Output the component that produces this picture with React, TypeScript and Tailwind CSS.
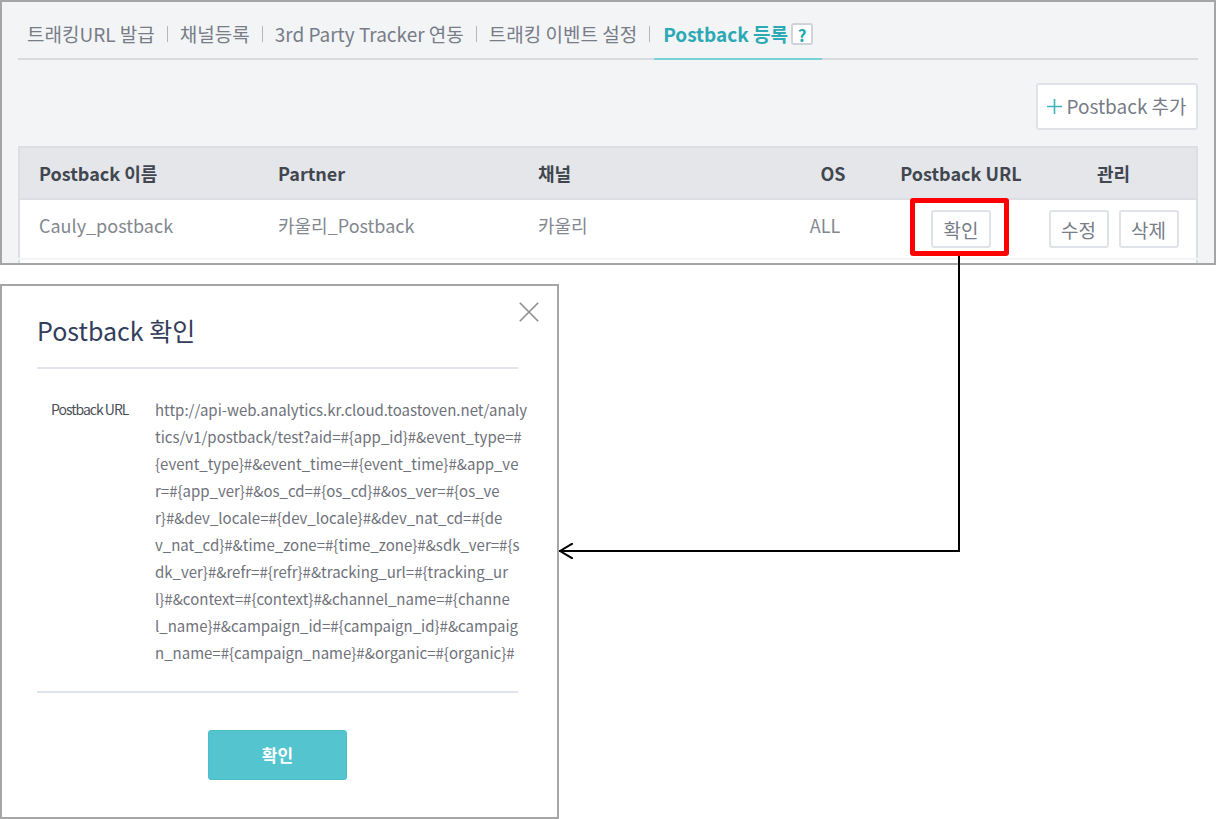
import React from "react";

const tabs = ["트래킹URL 발급", "채널등록", "3rd Party Tracker 연동", "트래킹 이벤트 설정"];

const urlLines = [
  "http://api-web.analytics.kr.cloud.toastoven.net/analy",
  "tics/v1/postback/test?aid=#{app_id}#&event_type=#",
  "{event_type}#&event_time=#{event_time}#&app_ve",
  "r=#{app_ver}#&os_cd=#{os_cd}#&os_ver=#{os_ve",
  "r}#&dev_locale=#{dev_locale}#&dev_nat_cd=#{de",
  "v_nat_cd}#&time_zone=#{time_zone}#&sdk_ver=#{s",
  "dk_ver}#&refr=#{refr}#&tracking_url=#{tracking_ur",
  "l}#&context=#{context}#&channel_name=#{channe",
  "l_name}#&campaign_id=#{campaign_id}#&campaig",
  "n_name=#{campaign_name}#&organic=#{organic}#",
];

function RowButton({ children }: { children: React.ReactNode }) {
  return (
    <button
      type="button"
      className="h-[38px] w-[60px] rounded-[3px] border-2 border-[#dfe2e7] bg-white text-[19px] leading-none text-[#777c87]"
    >
      {children}
    </button>
  );
}

function TabBar() {
  return (
    <nav className="flex h-[58px] items-stretch border-b-2 border-[#d9dbdf] pl-[9px] text-[19px] whitespace-nowrap text-[#777c87]">
      {tabs.map((tab) => (
        <div key={tab} className="flex items-center pt-2">
          <a href="#" className="block">
            {tab}
          </a>
          <span className="mx-3 h-4 w-px bg-[#b4b6bb]" />
        </div>
      ))}
      <div className="-mb-[2px] -ml-2 flex items-center gap-[3px] border-b-2 border-[#79d2d8] px-[9px] pt-2">
        <a href="#" aria-current="page" className="font-bold text-[#2ba9b4]">
          Postback 등록
        </a>
        <button
          type="button"
          aria-label="도움말"
          className="flex size-[22px] items-center justify-center rounded-[3px] border-2 border-[#d0d3d8] bg-white text-[17px] font-bold leading-none text-[#1ea9b0]"
        >
          ?
        </button>
      </div>
    </nav>
  );
}

function PostbackTable() {
  return (
    <table className="w-full table-fixed border-collapse text-left text-[18px] text-[#83878f]">
      <colgroup>
        <col className="w-[240px]" />
        <col className="w-[260px]" />
        <col />
        <col className="w-[116px]" />
        <col className="w-[140px]" />
        <col className="w-[166px]" />
      </colgroup>
      <thead>
        <tr className="h-[52px] border-2 border-[#dcdee3] bg-[#e4e6ea] text-[#41464f]">
          <th className="pl-[19px] font-bold">Postback 이름</th>
          <th className="pl-[19px] font-bold">Partner</th>
          <th className="pl-[19px] font-bold">채널</th>
          <th className="text-center font-bold">OS</th>
          <th className="text-center font-bold">Postback URL</th>
          <th className="text-center font-bold">관리</th>
        </tr>
      </thead>
      <tbody>
        <tr className="h-[60px] border-x-2 border-b-2 border-x-[#dcdee3] border-b-[#f4f5f6] bg-white">
          <td className="pb-2 pl-[19px]">Cauly_postback</td>
          <td className="pb-2 pl-[19px]">카울리_Postback</td>
          <td className="pb-2 pl-[19px]">카울리</td>
          <td className="pb-2 pr-4 text-center">ALL</td>
          <td>
            <div className="relative mx-auto w-[60px]">
              <RowButton>확인</RowButton>
              <span className="pointer-events-none absolute -top-3 -right-[18px] -bottom-2 -left-[21px] rounded-[3px] border-[5px] border-[#ff0000]" />
            </div>
          </td>
          <td>
            <div className="flex justify-center gap-[10px]">
              <RowButton>수정</RowButton>
              <RowButton>삭제</RowButton>
            </div>
          </td>
        </tr>
        <tr className="h-1 border-x-2 border-[#dcdee3] bg-white">
          <td colSpan={6} />
        </tr>
      </tbody>
    </table>
  );
}

function Connector() {
  return (
    <div className="relative z-10 -mt-7 mr-[256px] h-[296px] flex-1 border-r-2 border-b-2 border-black">
      <svg
        className="absolute -bottom-[9px] left-0"
        width="16"
        height="16"
        viewBox="0 0 16 16"
        fill="none"
        stroke="#000"
        strokeWidth="2"
        strokeLinecap="round"
        aria-hidden="true"
      >
        <path d="M13 0.8 L1 8 L13 15.2" />
      </svg>
    </div>
  );
}

function PostbackDialog() {
  return (
    <section
      role="dialog"
      aria-labelledby="dialog-title"
      className="relative w-[559px] shrink-0 border-2 border-[#a5a5a5] bg-white pb-[37px] pl-[35px] pr-[39px] pt-6"
    >
      <button type="button" aria-label="닫기" className="absolute right-[18px] top-4">
        <svg width="20" height="20" viewBox="0 0 20 20" fill="none" stroke="#8b8d90" strokeWidth="1.6" aria-hidden="true">
          <path d="M0.8 0.8 L19.2 19.2 M19.2 0.8 L0.8 19.2" />
        </svg>
      </button>
      <h2 id="dialog-title" className="text-[25px] leading-10 text-[#333d5c]">
        Postback 확인
      </h2>
      <div className="mt-[17px] flex border-y-2 border-[#e1e5eb] pb-[25px] pl-[14px] pt-[27px]">
        <div className="w-[104px] shrink-0 text-[14px] leading-[27px] tracking-[-1px] text-[#4b5058]">Postback URL</div>
        <p className="text-[15px] leading-[27px] whitespace-nowrap text-[#6f727b]">
          {urlLines.map((line) => (
            <span key={line} className="block">
              {line}
            </span>
          ))}
        </p>
      </div>
      <div className="mt-[37px] flex justify-center">
        <button
          type="button"
          className="h-[50px] w-[139px] rounded-[3px] border border-[#48bfc9] bg-[#54c4cf] text-[17px] font-bold text-white"
        >
          확인
        </button>
      </div>
    </section>
  );
}

export default function App() {
  return (
    <main className="flex flex-col gap-[19px] bg-white font-['Noto_Sans_CJK_KR',sans-serif]">
      <section className="border-2 border-[#a5a5a5] bg-[#f3f4f6] px-4">
        <TabBar />
        <div className="flex justify-end pb-4 pt-[23px]">
          <button
            type="button"
            className="flex h-[47px] w-[162px] items-center justify-center gap-1 rounded-[3px] border-2 border-[#dfe2e7] bg-white text-[19px] whitespace-nowrap text-[#777c87]"
          >
            <svg width="15" height="15" viewBox="0 0 15 15" stroke="#3fb3bc" strokeWidth="1.6" aria-hidden="true">
              <path d="M7.5 0 V15 M0 7.5 H15" />
            </svg>
            Postback 추가
          </button>
        </div>
        <PostbackTable />
      </section>
      <div className="flex items-start">
        <PostbackDialog />
        <Connector />
      </div>
    </main>
  );
}
